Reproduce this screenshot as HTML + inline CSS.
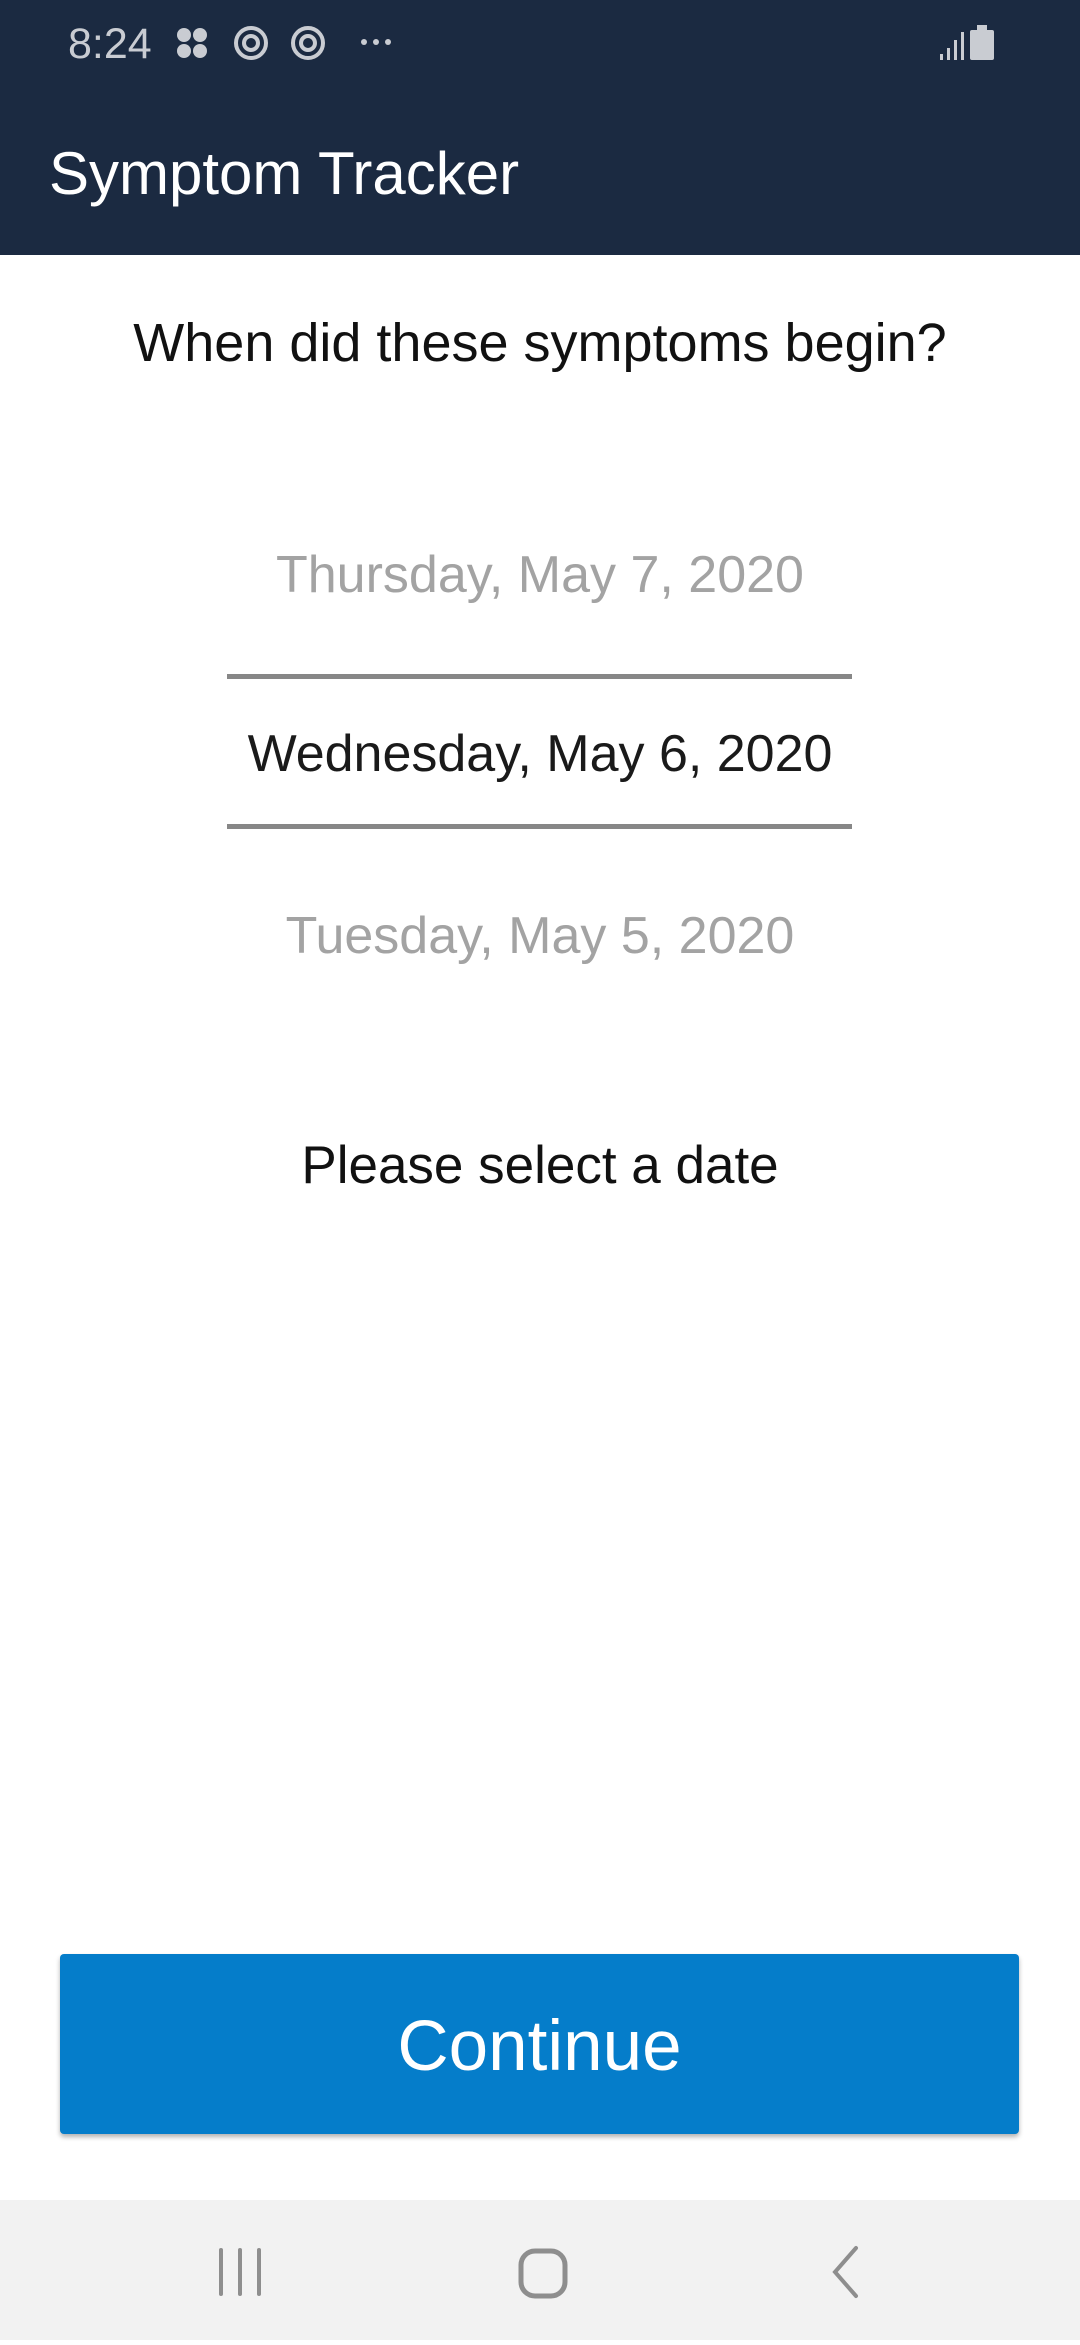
<!DOCTYPE html>
<html><head><meta charset="utf-8"><style>
*{margin:0;padding:0;box-sizing:border-box}
body{width:1080px;height:2340px;position:relative;background:#fff;font-family:"Liberation Sans",Arial,sans-serif;overflow:hidden}
.hdr{position:absolute;left:0;top:0;width:1080px;height:255px;background:#1b2a41}
.t{position:absolute;white-space:nowrap}
.c{left:0;width:1080px;text-align:center}
.line{position:absolute;left:227px;width:625px;height:5px;background:#878787}
.btn{position:absolute;left:60px;top:1954px;width:959px;height:180px;background:#057dca;border-radius:4px;box-shadow:0 3px 5px rgba(0,0,0,.3);color:#fff;font-size:71px;text-align:center;line-height:186px}
.nav{position:absolute;left:0;top:2200px;width:1080px;height:140px;background:#f2f2f2}
</style></head><body>
<div class="hdr">
 <div class="t" style="left:68px;top:20px;font-size:43px;color:#c9ccd2">8:24</div>
 <svg style="position:absolute;left:176px;top:25px" width="380" height="40">
  <g fill="#c9ccd2"><circle cx="8" cy="10" r="7"/><circle cx="24" cy="10" r="7"/><circle cx="8" cy="26" r="7"/><circle cx="24" cy="26" r="7"/></g>
  <g fill="none" stroke="#c9ccd2" stroke-width="4"><circle cx="75" cy="18" r="15"/><circle cx="75" cy="18" r="7"/><circle cx="132" cy="18" r="15"/><circle cx="132" cy="18" r="7"/></g>
  <g fill="#c9ccd2"><circle cx="188" cy="17" r="3"/><circle cx="200" cy="17" r="3"/><circle cx="212" cy="17" r="3"/></g>
 </svg>
 <svg style="position:absolute;left:938px;top:24px" width="80" height="40">
  <g fill="#c9ccd2"><rect x="2" y="30" width="3" height="6"/><rect x="9" y="24" width="3" height="12"/><rect x="16" y="16" width="3" height="20"/><rect x="23" y="8" width="3" height="28"/><rect x="32" y="6" width="24" height="30" rx="2"/><rect x="39" y="1" width="10" height="6"/></g>
 </svg>
 <div class="t" style="left:49px;top:139px;font-size:60px;color:#fff">Symptom Tracker</div>
</div>
<div class="t c" style="top:312px;font-size:54px;color:#111">When did these symptoms begin?</div>
<div class="t c" style="top:545px;font-size:52px;color:#a3a3a3">Thursday, May 7, 2020</div>
<div class="line" style="top:674px"></div>
<div class="t c" style="top:724px;font-size:52px;color:#1a1a1a">Wednesday, May 6, 2020</div>
<div class="line" style="top:824px"></div>
<div class="t c" style="top:906px;font-size:52px;color:#a3a3a3">Tuesday, May 5, 2020</div>
<div class="t c" style="top:1135px;font-size:53px;color:#111">Please select a date</div>
<div class="btn">Continue</div>
<div class="nav">
 <svg width="1080" height="140">
  <g stroke="#8e8e8e" stroke-width="4" stroke-linecap="round" fill="none">
   <line x1="221" y1="50" x2="221" y2="94"/><line x1="240" y1="50" x2="240" y2="94"/><line x1="259" y1="50" x2="259" y2="94"/>
   <rect x="521" y="51" width="44" height="45" rx="14" stroke-width="5"/>
   <polyline points="856,48 835,72 856,96"/>
  </g>
 </svg>
</div>
</body></html>
